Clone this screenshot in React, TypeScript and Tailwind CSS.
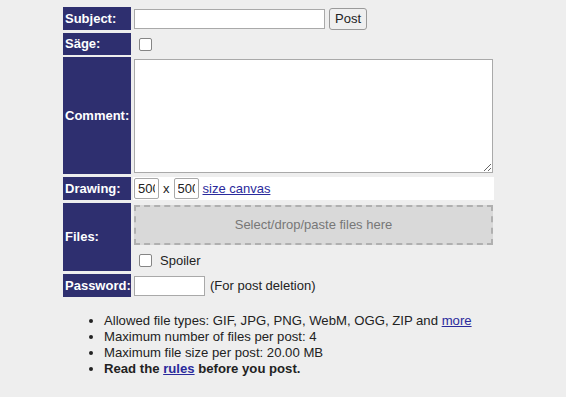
import React from "react";

const Label = ({ children, h }: { children: React.ReactNode; h: string }) => (
  <div className={`w-[68px] ${h} shrink-0 bg-[#2e2f6f] text-white font-bold px-[2px] flex items-center`}>
    {children}
  </div>
);

const Checkbox = () => (
  <span className="inline-block w-[13px] h-[13px] border border-[#858585] rounded-[2px] bg-white" />
);

export default function App() {
  return (
    <div className="min-h-[397px] bg-[#eeeeee] font-['Liberation_Sans',Arial,sans-serif] text-[13px] text-[#222]">
      <div className="pt-[7px] pl-[63px] flex flex-col">
        {/* Subject */}
        <div className="flex gap-[2px]">
          <Label h="h-[23px]">Subject:</Label>
          <div className="flex items-center px-[1px] gap-[4px]">
            <input className="w-[191px] h-[20px] border border-[#a9a9a9] bg-white outline-none" />
            <button className="h-[22px] px-[5px] border border-[#9a9a9a] rounded-[3px] bg-[#efefef] leading-none">
              Post
            </button>
          </div>
        </div>
        {/* Sage */}
        <div className="flex gap-[2px] mt-[3px]">
          <Label h="h-[22px]">Säge:</Label>
          <div className="flex items-center pl-[6px]">
            <Checkbox />
          </div>
        </div>
        {/* Comment */}
        <div className="flex gap-[2px] mt-[2px]">
          <Label h="h-[117px]">Comment:</Label>
          <div className="px-[1px] pt-[2px]">
            <textarea className="block w-[359px] h-[114px] border border-[#a9a9a9] bg-white outline-none resize-y" />
          </div>
        </div>
        {/* Drawing */}
        <div className="flex gap-[2px] mt-[3px]">
          <Label h="h-[23px]">Drawing:</Label>
          <div className="w-[361px] h-[23px] bg-white flex items-center px-[1px]">
            <input
              defaultValue="500"
              className="w-[25px] h-[21px] border border-[#a9a9a9] rounded-[2px] bg-white px-[3px] outline-none"
            />
            <span className="mx-[4px]">x</span>
            <input
              defaultValue="500"
              className="w-[25px] h-[21px] border border-[#a9a9a9] rounded-[2px] bg-white px-[3px] outline-none"
            />
            <a href="#" className="ml-[4px] text-[#2a2a9c] underline">
              size canvas
            </a>
          </div>
        </div>
        {/* Files */}
        <div className="flex gap-[2px] mt-[3px]">
          <Label h="h-[68px]">Files:</Label>
          <div className="px-[1px] pt-[2px]">
            <div className="w-[359px] h-[40px] bg-[#d9d9d9] border-2 border-dashed border-[#b0b0b0] flex items-center justify-center text-[#777]">
              Select/drop/paste files here
            </div>
            <div className="flex items-center gap-[8px] pl-[5px] mt-[6px]">
              <Checkbox />
              <span>Spoiler</span>
            </div>
          </div>
        </div>
        {/* Password */}
        <div className="flex gap-[2px] mt-[3px]">
          <Label h="h-[23px]">Password:</Label>
          <div className="flex items-center px-[1px] gap-[5px]">
            <input type="password" className="w-[71px] h-[20px] border border-[#a9a9a9] bg-white outline-none" />
            <span>(For post deletion)</span>
          </div>
        </div>
      </div>
      <ul className="list-disc ml-[104px] mt-[16px] leading-[16px] text-[13.15px]">
        <li>
          Allowed file types: GIF, JPG, PNG, WebM, OGG, ZIP and{" "}
          <a href="#" className="text-[#2a2a9c] underline">
            more
          </a>
        </li>
        <li>Maximum number of files per post: 4</li>
        <li>Maximum file size per post: 20.00 MB</li>
        <li className="font-bold">
          Read the{" "}
          <a href="#" className="text-[#2a2a9c] underline">
            rules
          </a>{" "}
          before you post.
        </li>
      </ul>
    </div>
  );
}
